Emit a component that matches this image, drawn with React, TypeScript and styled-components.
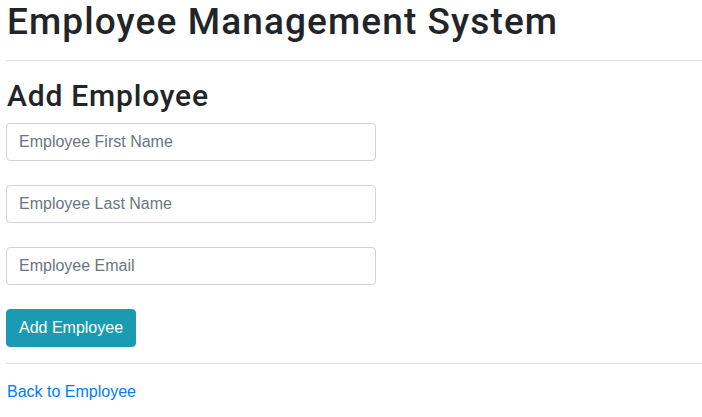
import React from "react";
import styled, { createGlobalStyle } from "styled-components";

const Global = createGlobalStyle`
  html, body { margin: 0; padding: 0; background: #fff; }
  body {
    font-family: "Liberation Sans", Arial, sans-serif;
    color: #212529;
    font-size: 16px;
    line-height: 1.5;
  }
  * { box-sizing: border-box; }
`;

const Page = styled.div`
  padding: 0 0 0 6px;
  display: flex;
  flex-direction: column;
`;

const Title = styled.h1`
  margin: 0 0 0 1px;
  font-family: Roboto, "Liberation Sans", sans-serif;
  font-size: 37px;
  font-weight: 500;
  line-height: 44px;
  letter-spacing: 1.1px;
  white-space: nowrap;
`;

const Rule = styled.hr<{ $top: number }>`
  margin: ${(p) => p.$top}px 0 0 0;
  border: 0;
  border-top: 1px solid rgba(0, 0, 0, 0.12);
  width: 100%;
`;

const SubTitle = styled.h2`
  margin: 17px 0 9px 1px;
  font-family: Roboto, "Liberation Sans", sans-serif;
  font-size: 30px;
  font-weight: 500;
  line-height: 36px;
  letter-spacing: 0.8px;
`;

const Form = styled.form`
  display: flex;
  flex-direction: column;
  gap: 24px;
  align-items: flex-start;
`;

const Input = styled.input`
  width: 370px;
  height: 38px;
  padding: 6px 12px;
  font-family: inherit;
  font-size: 16px;
  color: #495057;
  border: 1px solid #ced4da;
  border-radius: 4px;
  background: #fff;
  outline: none;
  &::placeholder { color: #6c757d; }
`;

const Button = styled.button`
  height: 38px;
  padding: 6px 12px;
  white-space: nowrap;
  font-family: inherit;
  font-size: 16px;
  color: #fff;
  background: #1a9bb1;
  border: 1px solid #1a9bb1;
  border-radius: 4px;
  cursor: pointer;
`;

const Link = styled.a`
  margin-top: 16px;
  color: #007bff;
  text-decoration: none;
  font-size: 16px;
  line-height: 24px;
  align-self: flex-start;
  margin-left: 1px;
`;

export default function App() {
  return (
    <>
      <Global />
      <Page>
        <Title>Employee Management System</Title>
        <Rule $top={16} />
        <SubTitle>Add Employee</SubTitle>
        <Form onSubmit={(e) => e.preventDefault()}>
          <Input placeholder="Employee First Name" />
          <Input placeholder="Employee Last Name" />
          <Input placeholder="Employee Email" />
          <Button type="submit">Add Employee</Button>
        </Form>
        <Rule $top={16} />
        <Link href="#">Back to Employee</Link>
      </Page>
    </>
  );
}
